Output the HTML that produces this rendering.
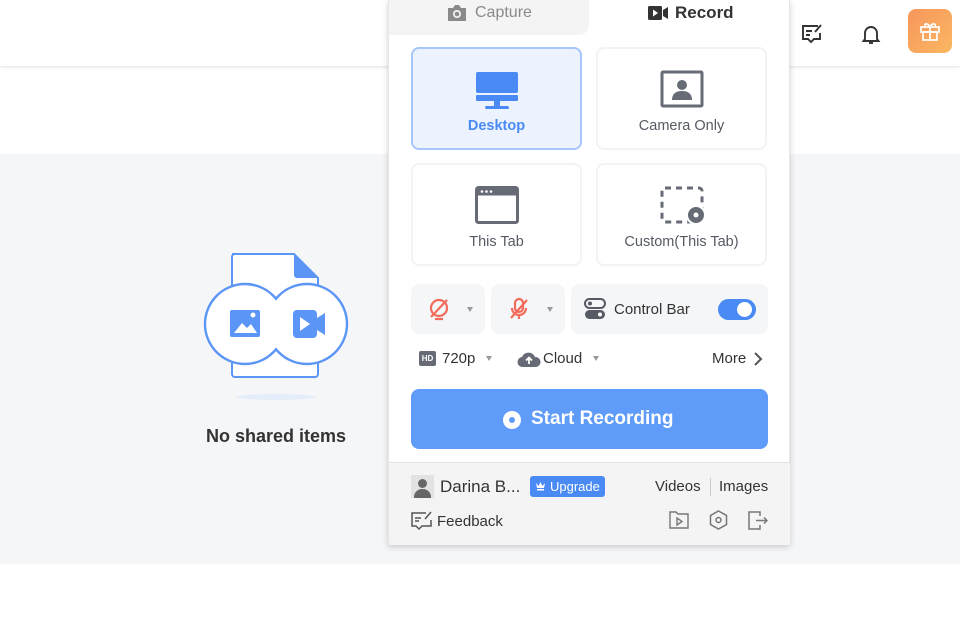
<!DOCTYPE html>
<html><head><style>
*{box-sizing:border-box;margin:0;padding:0}
body{width:960px;height:640px;overflow:hidden;background:#fff;font-family:"Liberation Sans",Arial,sans-serif;position:relative;color:#333}
.hdr{position:absolute;left:0;top:0;width:960px;height:66px;background:#fff;box-shadow:0 1px 3px rgba(0,0,0,.12)}
.gray{position:absolute;left:0;top:154px;width:960px;height:410px;background:#f5f6f8}
.abs{position:absolute}
.pop{position:absolute;left:388px;top:0;width:402px;height:545px;background:#fff;box-shadow:0 2px 6px rgba(0,0,0,.18);border:1px solid #e6e6e6;border-top:none}
.card{position:absolute;width:171px;height:103px;border:2px solid #f2f3f5;border-radius:8px;text-align:center;font-size:14.5px;color:#555a64}
.card .lbl{position:absolute;left:0;right:0;top:69px}
.pill{position:absolute;top:284px;height:50px;background:#f5f6f8;border-radius:8px}
.tri{position:absolute;width:0;height:0;border-left:3.5px solid transparent;border-right:3.5px solid transparent;border-top:5px solid #999}
</style></head><body>
<div class="hdr"></div>
<div class="gray"></div>
<svg class="abs" style="left:800px;top:22px" width="24" height="24" viewBox="0 0 24 24" fill="none" stroke="#333" stroke-width="1.9"><path d="M18 4H3v13h5l3 3 3-3h6v-6"/><path d="M6 9h6M6 13h4"/><path d="M21 3l-6 7"/></svg>
<svg class="abs" style="left:859px;top:22px" width="24" height="24" viewBox="0 0 24 24" fill="none" stroke="#333" stroke-width="1.9"><path d="M6 17V11a6 6 0 0 1 12 0v6l1.5 2h-15z"/><path d="M10 21h4"/></svg>
<div class="abs" style="left:908px;top:9px;width:44px;height:44px;border-radius:8px;background:linear-gradient(135deg,#f7955c,#fbb862)"></div>
<svg class="abs" style="left:918px;top:20px" width="24" height="22" viewBox="0 0 24 22" fill="none" stroke="#fff" stroke-width="1.7"><rect x="3" y="7" width="18" height="5"/><rect x="5" y="12" width="14" height="8"/><path d="M12 7v13M12 7c-2-4-6-4-5-1M12 7c2-4 6-4 5-1"/></svg>
<svg class="abs" style="left:200px;top:248px" width="152" height="155" viewBox="0 0 152 155">
<defs><clipPath id="cl"><rect x="0" y="0" width="76" height="155"/></clipPath><clipPath id="cr"><rect x="76" y="0" width="76" height="155"/></clipPath></defs>
<path d="M32 6h62l24 24v96a3 3 0 0 1-3 3H35a3 3 0 0 1-3-3V9a3 3 0 0 1 3-3z" fill="#fff" stroke="#5b95f5" stroke-width="2"/>
<path d="M94 6l24 24H97a3 3 0 0 1-3-3z" fill="#5b95f5"/>
<circle cx="45" cy="76" r="40" fill="#fff"/>
<circle cx="107" cy="76" r="40" fill="#fff"/>
<circle cx="45" cy="76" r="40" fill="none" stroke="#5b95f5" stroke-width="2.4" clip-path="url(#cl)"/>
<circle cx="107" cy="76" r="40" fill="none" stroke="#5b95f5" stroke-width="2.4" clip-path="url(#cr)"/>
<rect x="30" y="62" width="30" height="27" rx="2" fill="#5b95f5"/>
<path d="M34 85l8-10 5 5 4-4 6 9z" fill="#fff"/><circle cx="53" cy="67" r="2.5" fill="#fff"/>
<rect x="93" y="62" width="24" height="28" rx="4" fill="#5b95f5"/><path d="M117 70l8-5v22l-8-5z" fill="#5b95f5"/>
<path d="M100 69v14l10-7z" fill="#fff"/>
<ellipse cx="76" cy="149" rx="40" ry="3" fill="#e5ecfa"/>
</svg>
<div class="abs" style="left:160px;top:426px;width:232px;text-align:center;font-size:18px;font-weight:bold;color:#333">No shared items</div>

<div class="pop">
 <div class="abs" style="left:0;top:0;width:200px;height:35px;background:#f4f4f5;border-bottom-right-radius:10px"></div>
 <svg class="abs" style="left:57px;top:3px" width="22" height="20" viewBox="0 0 22 20"><path d="M2 5h5l2-3h4l2 3h5v13H2z" fill="#8a8a8a"/><circle cx="11" cy="11" r="4" fill="#f4f4f5"/><circle cx="11" cy="11" r="2.3" fill="#8a8a8a"/></svg>
 <div class="abs" style="left:86px;top:4px;font-size:16px;color:#8a8a8a">Capture</div>
 <svg class="abs" style="left:258px;top:5px" width="22" height="16" viewBox="0 0 22 16"><rect x="1" y="1" width="14" height="14" rx="1.5" fill="#333"/><path d="M6 4.5v7l5-3.5z" fill="#fff"/><path d="M16 5l5-3v12l-5-3z" fill="#333"/></svg>
 <div class="abs" style="left:286px;top:3px;font-size:17px;font-weight:bold;color:#333">Record</div>

 <div class="card" style="left:22px;top:47px;background:#edf3fe;border-color:#a7c6fb;color:#4a8af4;font-weight:bold">
  <svg class="abs" style="left:62px;top:22px" width="44" height="40" viewBox="0 0 44 40"><rect x="1" y="1" width="42" height="21" rx="2" fill="#4a8af4"/><rect x="1" y="24" width="42" height="6" rx="1" fill="#4a8af4"/><rect x="19" y="30" width="6" height="5" fill="#4a8af4"/><rect x="10" y="35" width="24" height="3" rx="1.5" fill="#4a8af4"/></svg>
  <div class="lbl">Desktop</div></div>
 <div class="card" style="left:207px;top:47px">
  <svg class="abs" style="left:62px;top:21px" width="44" height="38" viewBox="0 0 44 38"><rect x="2" y="2" width="40" height="34" rx="1" fill="none" stroke="#666b75" stroke-width="3"/><circle cx="22" cy="15" r="5" fill="#666b75"/><path d="M12 30c0-7 5-9 10-9s10 2 10 9z" fill="#666b75"/></svg>
  <div class="lbl">Camera Only</div></div>
 <div class="card" style="left:22px;top:163px">
  <svg class="abs" style="left:62px;top:21px" width="44" height="38" viewBox="0 0 44 38"><rect x="1.5" y="1.5" width="41" height="35" rx="2" fill="none" stroke="#666b75" stroke-width="3"/><rect x="1.5" y="1.5" width="41" height="8" fill="#666b75"/><circle cx="7" cy="5.5" r="1.3" fill="#fff"/><circle cx="11.5" cy="5.5" r="1.3" fill="#fff"/><circle cx="16" cy="5.5" r="1.3" fill="#fff"/></svg>
  <div class="lbl">This Tab</div></div>
 <div class="card" style="left:207px;top:163px">
  <svg class="abs" style="left:62px;top:21px" width="48" height="40" viewBox="0 0 48 40"><rect x="2" y="2" width="40" height="34" rx="3" fill="none" stroke="#666b75" stroke-width="3" stroke-dasharray="6 5"/><circle cx="36" cy="29" r="9" fill="#666b75" stroke="#fff" stroke-width="2"/><circle cx="36" cy="29" r="2.5" fill="#fff"/></svg>
  <div class="lbl">Custom(This Tab)</div></div>

 <div class="pill" style="left:22px;width:74px"></div>
 <svg class="abs" style="left:38px;top:297px" width="24" height="24" viewBox="0 0 24 24" fill="none" stroke="#f26b5b" stroke-width="2.2"><circle cx="12" cy="11" r="8"/><path d="M8 22h8M4 20L20 3"/></svg>
 <div class="tri" style="left:78px;top:307px"></div>
 <div class="pill" style="left:102px;width:74px"></div>
 <svg class="abs" style="left:118px;top:297px" width="24" height="24" viewBox="0 0 24 24" fill="none" stroke="#f26b5b" stroke-width="2.2"><rect x="8" y="2" width="8" height="13" rx="4"/><path d="M5 11a7 7 0 0 0 14 0M12 18v4M4 21L20 3"/></svg>
 <div class="tri" style="left:158px;top:307px"></div>
 <div class="pill" style="left:182px;width:197px"></div>
 <svg class="abs" style="left:195px;top:298px" width="22" height="22" viewBox="0 0 22 22"><rect x="1" y="1" width="20" height="9" rx="4.5" fill="none" stroke="#555a64" stroke-width="2"/><circle cx="6" cy="5.5" r="2" fill="#555a64"/><rect x="1" y="12" width="20" height="9" rx="4.5" fill="#555a64"/><circle cx="16" cy="16.5" r="2" fill="#fff"/></svg>
 <div class="abs" style="left:225px;top:301px;font-size:15px;color:#333">Control Bar</div>
 <div class="abs" style="left:329px;top:299px;width:38px;height:21px;border-radius:11px;background:#4a8af4"></div>
 <div class="abs" style="left:348px;top:302px;width:15px;height:15px;border-radius:50%;background:#fff"></div>

 <div class="abs" style="left:30px;top:351px;width:17px;height:15px;border-radius:2px;background:#666b75;color:#fff;font-size:8px;font-weight:bold;text-align:center;line-height:15px">HD</div>
 <div class="abs" style="left:53px;top:350px;font-size:15px;color:#333">720p</div>
 <div class="tri" style="left:97px;top:356px"></div>
 <svg class="abs" style="left:128px;top:350px" width="24" height="18" viewBox="0 0 24 18"><path d="M6 17a5 5 0 0 1-1-10 7 7 0 0 1 13 0 5 5 0 0 1 1 10z" fill="#666b75"/><path d="M12 14V8M9 10.5l3-3 3 3" stroke="#fff" stroke-width="1.8" fill="none"/></svg>
 <div class="abs" style="left:154px;top:350px;font-size:15px;color:#333">Cloud</div>
 <div class="tri" style="left:204px;top:356px"></div>
 <div class="abs" style="left:323px;top:350px;font-size:15px;color:#333">More</div>
 <svg class="abs" style="left:364px;top:352px" width="10" height="14" viewBox="0 0 10 14" fill="none" stroke="#555" stroke-width="2"><path d="M2 1l6 6-6 6"/></svg>

 <div class="abs" style="left:22px;top:389px;width:357px;height:60px;border-radius:8px;background:#5f9bf8"></div>
 <div class="abs" style="left:114px;top:411px;width:18px;height:18px;border-radius:50%;background:#fff"></div>
 <div class="abs" style="left:120px;top:417px;width:6px;height:6px;border-radius:50%;background:#5f9bf8"></div>
 <div class="abs" style="left:142px;top:408px;font-size:19px;font-weight:bold;color:#fff">Start Recording</div>

 <div class="abs" style="left:0;top:462px;width:401px;height:83px;background:#f4f4f5;border-top:1px solid #e2e2e2"></div>
 <div class="abs" style="left:22px;top:475px;width:23px;height:23px;background:#e2e2e2;overflow:hidden"><div class="abs" style="left:7px;top:4px;width:9px;height:9px;border-radius:50%;background:#666"></div><div class="abs" style="left:3px;top:14px;width:17px;height:12px;border-radius:8px 8px 0 0;background:#666"></div></div>
 <div class="abs" style="left:51px;top:477px;font-size:17px;color:#333">Darina B...</div>
 <div class="abs" style="left:141px;top:476px;width:75px;height:21px;border-radius:3px;background:#4a8af4;color:#fff;font-size:13px;line-height:21px;padding-left:20px">Upgrade</div>
 <svg class="abs" style="left:146px;top:481px" width="11" height="10" viewBox="0 0 11 10"><path d="M1 2l2.5 3L5.5 1l2 4L10 2l-1 5H2z M2 8h7v1.5H2z" fill="#fff"/></svg>
 <div class="abs" style="left:266px;top:478px;font-size:15px;color:#333">Videos</div>
 <div class="abs" style="left:321px;top:478px;width:1px;height:18px;background:#ccc"></div>
 <div class="abs" style="left:330px;top:478px;font-size:15px;color:#333">Images</div>
 <svg class="abs" style="left:22px;top:511px" width="22" height="20" viewBox="0 0 22 20" fill="none" stroke="#555" stroke-width="1.5"><path d="M15 2H1v13h4l3 3 3-3h9V9"/><path d="M4 7h6M4 10h4M20 1l-6 7"/></svg>
 <div class="abs" style="left:48px;top:513px;font-size:15px;color:#333">Feedback</div>
 <svg class="abs" style="left:280px;top:511px" width="20" height="18" viewBox="0 0 20 18" fill="none" stroke="#777" stroke-width="1.4"><path d="M1 1h6l2 2h10v14H1z"/><path d="M8 7v7l5-3.5z"/></svg>
 <svg class="abs" style="left:320px;top:510px" width="19" height="20" viewBox="0 0 19 20" fill="none" stroke="#777" stroke-width="1.5"><path d="M9.5 1l8 4.5v9l-8 4.5-8-4.5v-9z"/><circle cx="9.5" cy="10" r="2.5"/></svg>
 <svg class="abs" style="left:359px;top:511px" width="20" height="19" viewBox="0 0 20 19" fill="none" stroke="#777" stroke-width="1.5"><path d="M12 5V1H1v17h11v-4M8 9.5h11M16 6.5l3 3-3 3"/></svg>
</div>
</body></html>
